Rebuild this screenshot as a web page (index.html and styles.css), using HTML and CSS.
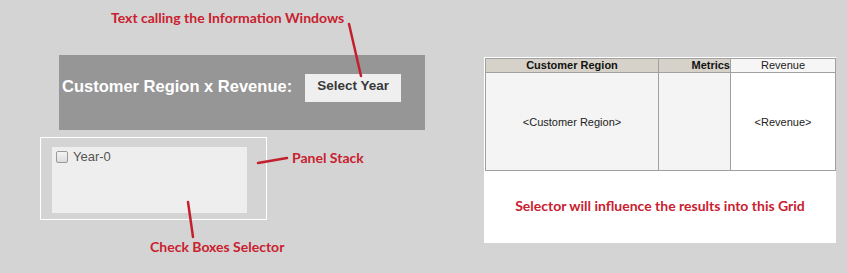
FILE: index.html
```html
<!DOCTYPE html>
<html>
<head>
<meta charset="utf-8">
<link rel="stylesheet" href="styles.css">
</head>
<body>
<div class="page">
  <div class="left-col">
    <div class="title-panel">
      <span class="title-text">Customer Region x Revenue:</span>
      <button class="select-btn">Select Year</button>
    </div>
    <div class="panel-stack">
      <div class="checkbox-selector">
        <label class="check-item"><span class="checkbox"></span><span class="check-label">Year-0</span></label>
      </div>
    </div>
  </div>
  <div class="grid-box">
    <table class="grid">
      <colgroup><col class="c1"><col class="c2"><col class="c3"></colgroup>
      <thead>
        <tr>
          <th class="h-region">Customer Region</th>
          <th class="h-metrics">Metrics</th>
          <th class="h-revenue">Revenue</th>
        </tr>
      </thead>
      <tbody>
        <tr>
          <td class="b-region">&lt;Customer Region&gt;</td>
          <td class="b-metrics"></td>
          <td class="b-revenue">&lt;Revenue&gt;</td>
        </tr>
      </tbody>
    </table>
    <div class="grid-note note">Selector will influence the results into this Grid</div>
  </div>

  <div class="note note-info">Text calling the Information Windows</div>
  <div class="note note-stack">Panel Stack</div>
  <div class="note note-check">Check Boxes Selector</div>
  <svg class="arrows" width="847" height="273" viewBox="0 0 847 273">
    <line x1="349" y1="24" x2="361" y2="76"/>
    <line x1="258" y1="163" x2="287" y2="158"/>
    <line x1="188" y1="202" x2="193" y2="237"/>
  </svg>
</div>
</body>
</html>
```
FILE: styles.css
```css
html, body {
  margin: 0;
  padding: 0;
  background: #d4d4d4;
}
.page {
  position: relative;
  width: 847px;
  height: 273px;
  overflow: hidden;
  display: flex;
  align-items: flex-start;
  padding: 55px 0 0 40px;
  box-sizing: border-box;
  gap: 59px;
  font-family: "Liberation Sans", Arial, sans-serif;
}
.left-col {
  display: flex;
  flex-direction: column;
  gap: 7px;
}
.title-panel {
  margin-left: 19px;
  width: 366px;
  height: 75px;
  background: #969696;
  display: flex;
  align-items: flex-start;
  padding: 19px 0 0 3px;
  box-sizing: border-box;
  gap: 13px;
}
.title-text {
  color: #ffffff;
  font-weight: bold;
  font-size: 16.5px;
  line-height: 20px;
  margin-top: 2px;
}
.select-btn {
  width: 96px;
  height: 28px;
  background: #efefef;
  border: none;
  padding: 0 0 5px 0;
  margin: 0;
  font-family: "Liberation Sans", Arial, sans-serif;
  font-weight: bold;
  font-size: 13.5px;
  color: #3a3a3a;
}
.panel-stack {
  width: 227px;
  height: 83px;
  border: 1px solid #ffffff;
  box-sizing: border-box;
  padding: 9px 19px 0 11px;
}
.checkbox-selector {
  width: 195px;
  height: 66px;
  background: #eeeeee;
  padding: 3px 0 0 4px;
  box-sizing: border-box;
}
.check-item {
  display: flex;
  align-items: center;
  gap: 5px;
}
.checkbox {
  width: 10px;
  height: 10px;
  border: 1px solid #9a9a9a;
  border-radius: 2px;
  background: linear-gradient(#f4f4f4, #dcdcdc);
}
.check-label {
  font-size: 13px;
  line-height: 14px;
  color: #555555;
}
.grid-box {
  margin-top: 2px;
  width: 352px;
  height: 186px;
  background: #ffffff;
  padding: 1px 1px 0 1px;
  box-sizing: border-box;
  display: flex;
  flex-direction: column;
}
.grid {
  border-collapse: collapse;
  table-layout: fixed;
  width: 350px;
  font-size: 11px;
  color: #1a1a1a;
}
.c1 { width: 173px; }
.c2 { width: 72px; }
.c3 { width: 105px; }
.grid th, .grid td {
  border: 1px solid #a0a0a0;
  padding: 0;
}
.grid th {
  height: 13px;
  line-height: 13px;
  background: #d6d1c9;
  font-weight: bold;
  color: #111;
}
.grid th.h-metrics {
  text-align: right;
  padding-right: 0;
  overflow: visible;
  white-space: nowrap;
}
.grid th.h-revenue {
  background: #f6f6f6;
  font-weight: normal;
  color: #222;
}
.grid td {
  height: 97px;
  text-align: center;
  background: #f4f4f4;
  color: #222;
}
.grid td.b-revenue {
  background: #ffffff;
}
.grid-note {
  margin-top: 26px;
  text-align: center;
}
.note {
  color: #c9212f;
  font-family: Lato, "Liberation Sans", sans-serif;
  font-weight: bold;
  font-size: 14px;
  line-height: 17px;
  white-space: nowrap;
}
.note-info { position: absolute; left: 111px; top: 9px; }
.note-stack { position: absolute; left: 292px; top: 149px; }
.note-check { position: absolute; left: 150px; top: 238px; }
.arrows {
  position: absolute;
  left: 0;
  top: 0;
  pointer-events: none;
}
.arrows line {
  stroke: #c41f2e;
  stroke-width: 2.5;
  stroke-linecap: round;
}
```
